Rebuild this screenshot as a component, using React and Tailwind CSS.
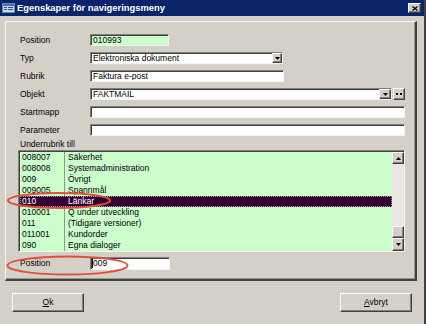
const rows = [
  ['008007', 'Säkerhet'],
  ['008008', 'Systemadministration'],
  ['009', 'Övrigt'],
  ['009005', 'Spannmål'],
  ['010', 'Länkar', true],
  ['010001', 'Q under utveckling'],
  ['011', '(Tidigare versioner)'],
  ['011001', 'Kundorder'],
  ['090', 'Egna dialoger'],
];

function Arrow({ up }) {
  return (
    <svg width="5" height="3" viewBox="0 0 5 3">
      <path d={up ? 'M0 3 L2.5 0 L5 3 Z' : 'M0 0 L5 0 L2.5 3 Z'} fill="#000" />
    </svg>
  );
}

function RaisedBox({ className, children }) {
  return (
    <div className={`flex items-center justify-center bg-[#d4d0c8] border-t border-l border-[#ffffff] border-r border-b border-r-[#404040] border-b-[#404040] shadow-[inset_-1px_-1px_0_#808080] ${className}`}>
      {children}
    </div>
  );
}

function Field({ label, width, bg = 'bg-white', value, children }) {
  return (
    <div className="flex items-center h-[12px]">
      <div className="w-[72px] pl-[2px]">{label}</div>
      <div className={`h-[12px] ${width} ${bg} flex items-center border-t border-l border-[#808080] border-b border-r border-b-[#f4f3ef] border-r-[#f4f3ef] shadow-[inset_1px_1px_0_#404040] pl-[2px]`}>
        <span className="flex-1 truncate leading-none">{value}</span>
        {children}
      </div>
    </div>
  );
}

export default function App() {
  return (
    <div className="relative w-[426px] h-[324px] overflow-hidden bg-[#d4d0c8] text-[8.5px] text-black font-['Liberation_Sans',Arial,sans-serif] border-r-2 border-[#404040]">
      {/* Title bar */}
      <div className="h-[16px] bg-[#0a246a] flex items-center pl-[2px] pr-[3px]">
        <svg width="13" height="10" viewBox="0 0 13 10" className="mr-[2px]">
          <rect x="0" y="0" width="13" height="10" fill="#c8d4e8" />
          <rect x="0.5" y="0.5" width="12" height="9" fill="none" stroke="#6f86b8" />
          <rect x="1" y="1" width="11" height="2" fill="#4a6fb5" />
          <rect x="2" y="4" width="3" height="1" fill="#30509a" />
          <rect x="6" y="4" width="5" height="1" fill="#30509a" />
          <rect x="2" y="6" width="3" height="1" fill="#30509a" />
          <rect x="6" y="6" width="5" height="1" fill="#30509a" />
        </svg>
        <span className="text-white font-bold text-[9.4px] leading-none">Egenskaper för navigeringsmeny</span>
        <RaisedBox className="ml-auto w-[13px] h-[10px]">
          <svg width="6" height="5" viewBox="0 0 6 5">
            <path d="M0.5 0.5 L5.5 4.5 M5.5 0.5 L0.5 4.5" stroke="#000" strokeWidth="1.3" />
          </svg>
        </RaisedBox>
      </div>

      {/* Body */}
      <div className="pl-[5px] pt-[5px]">
        <div className="w-[412px] h-[260px] border-t border-l border-[#f6f5f1] border-r-2 border-b-2 border-r-[#404040] border-b-[#404040] shadow-[inset_-1px_-1px_0_#9a978f] pl-[12px] pt-[12px] flex flex-col">
          <div className="flex flex-col gap-[6px]">
            <Field label="Position" width="w-[79px]" bg="bg-[#ccffcc]" value="010993" />
            <Field label="Typ" width="w-[193px]" value="Elektroniska dokument">
              <RaisedBox className="w-[10px] h-[10px]">
                <Arrow />
              </RaisedBox>
            </Field>
            <Field label="Rubrik" width="w-[194px]" value="Faktura e-post" />
            <div className="flex items-center">
              <Field label="Objekt" width="w-[302px]" value="FAKTMAIL">
                <RaisedBox className="w-[12px] h-[10px]">
                  <Arrow />
                </RaisedBox>
              </Field>
              <RaisedBox className="ml-[1px] w-[12px] h-[12px]">
                <svg width="6" height="2" viewBox="0 0 6 2">
                  <rect x="0" y="0" width="2" height="2" fill="#000" />
                  <rect x="4" y="0" width="2" height="2" fill="#000" />
                </svg>
              </RaisedBox>
            </div>
            <Field label="Startmapp" width="w-[315px]" value="" />
            <Field label="Parameter" width="w-[315px]" value="" />
          </div>

          <div className="pl-[2px] mt-[3px] h-[10px] leading-[10px]">Underrubrik till</div>

          {/* List */}
          <div className="mt-[1px] w-[387px] h-[102px] flex bg-[#ccffcc] border-t border-l border-[#808080] border-b border-r border-b-[#f4f3ef] border-r-[#f4f3ef] shadow-[inset_1px_1px_0_#404040] pt-[1px] pl-[1px]">
            <div className="flex-1 flex flex-col">
              {rows.map(([code, name, sel]) => (
                <div
                  key={code}
                  className={`h-[11.25px] flex items-center leading-none ${sel ? 'bg-[#330033] text-white outline-1 outline-dotted outline-[#b0a0b0] -outline-offset-1' : ''}`}
                >
                  <div className={`w-[45px] h-full flex items-center pl-[2px] border-r ${sel ? 'border-[#330033]' : 'border-[#8c9a8c]'}`}>{code}</div>
                  <div className="pl-[3px]">{name}</div>
                </div>
              ))}
            </div>
            <div className="w-[12px] h-full flex flex-col bg-[#eae8e3]">
              <RaisedBox className="w-[12px] h-[12px]">
                <Arrow up />
              </RaisedBox>
              <div className="flex-1 flex flex-col justify-end">
                <RaisedBox className="w-[12px] h-[12px]" />
              </div>
              <RaisedBox className="w-[12px] h-[13px]">
                <Arrow />
              </RaisedBox>
            </div>
          </div>

          <div className="mt-[5px]">
            <div className="flex items-center h-[13px]">
              <div className="w-[72px] pl-[2px]">Position</div>
              <div className="h-[13px] w-[80px] bg-white flex items-center border-t border-l border-[#808080] border-b border-r border-b-[#f4f3ef] border-r-[#f4f3ef] shadow-[inset_1px_1px_0_#404040]">
                <div className="w-[1px] h-[9px] bg-black ml-[1px]" />
                <span className="leading-none">009</span>
              </div>
            </div>
          </div>
        </div>

        {/* Buttons */}
        <div className="flex justify-between mt-[12px] pl-[7px] pr-[12px]">
          <div className="w-[72px] h-[19px] flex items-center justify-center bg-[#d4d0c8] border-t border-l border-white border-r border-b border-r-[#404040] border-b-[#404040] shadow-[inset_-1px_-1px_0_#808080]">
            <span><span className="underline">O</span>k</span>
          </div>
          <div className="w-[72px] h-[19px] flex items-center justify-center bg-[#d4d0c8] border-t border-l border-white border-r border-b border-r-[#404040] border-b-[#404040] shadow-[inset_-1px_-1px_0_#808080]">
            <span><span className="underline">A</span>vbryt</span>
          </div>
        </div>
      </div>

      {/* Red annotation ellipses */}
      <svg className="absolute inset-0 pointer-events-none" width="426" height="324" viewBox="0 0 426 324">
        <ellipse cx="59" cy="200.5" rx="51" ry="7.5" fill="none" stroke="#e0503c" strokeWidth="2" />
        <ellipse cx="67.5" cy="265.5" rx="60" ry="9" fill="none" stroke="#e0503c" strokeWidth="2" />
      </svg>
    </div>
  );
}
